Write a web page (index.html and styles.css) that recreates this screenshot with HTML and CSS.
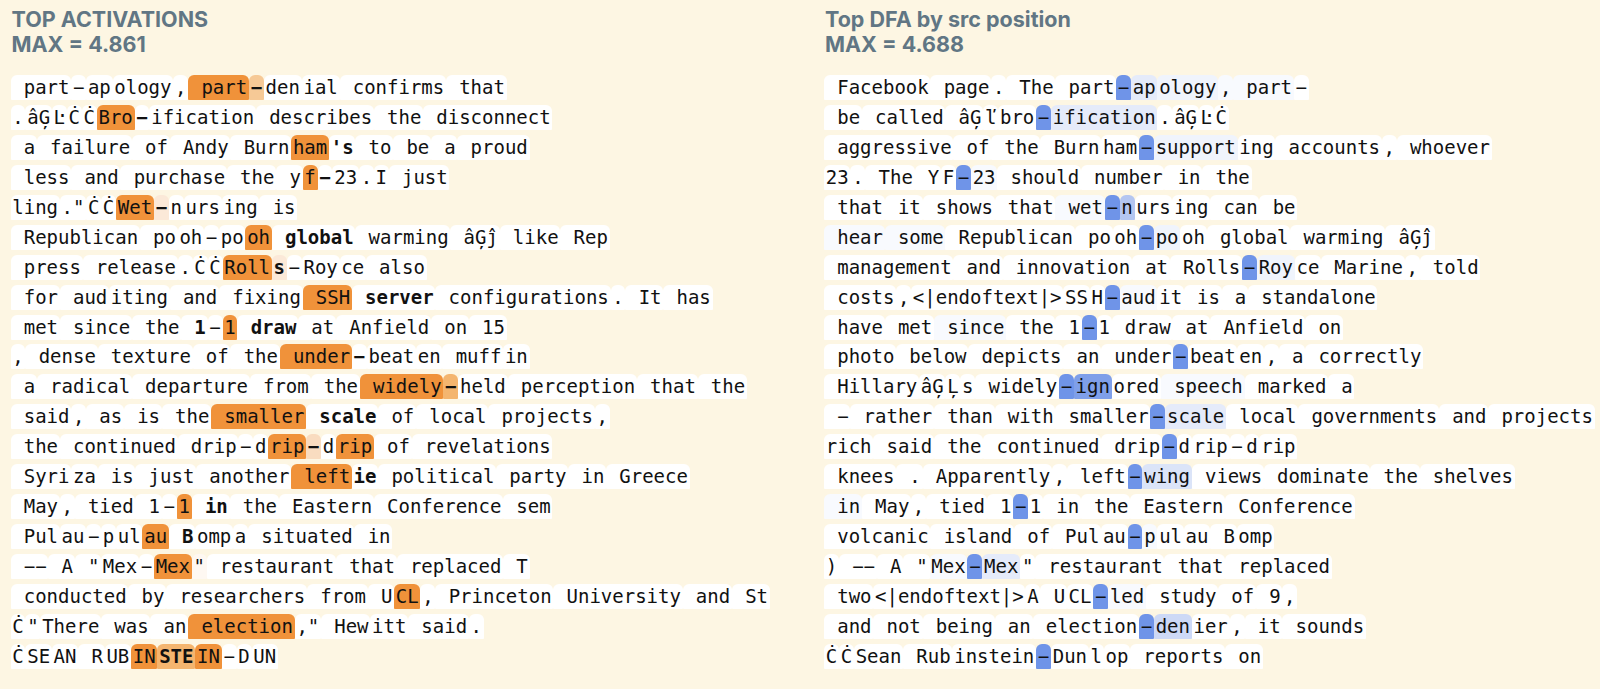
FILE: index.html
```html
<!DOCTYPE html>
<html lang="en">
<head>
<meta charset="utf-8">
<title>Top activations</title>
<link rel="stylesheet" href="styles.css">
</head>
<body>
<main class="columns">
<section class="panel">
<h2 class="title">TOP ACTIVATIONS<br>MAX = 4.861</h2>
<div class="rows">
<div class="row"><span> part</span><span>−</span><span>ap</span><span>ology</span><span>,</span><span class="o"> part</span><span class="p2 b">−</span><span>den</span><span>ial</span><span> confirms</span><span> that</span></div>
<div class="row"><span>.</span><span>âĢ</span><span>Ŀ</span><span>Ċ</span><span>Ċ</span><span class="o">Bro</span><span class="b">−</span><span>ification</span><span> describes</span><span> the</span><span> disconnect</span></div>
<div class="row"><span> a</span><span> failure</span><span> of</span><span> Andy</span><span> Burn</span><span class="o">ham</span><span class="b">'s</span><span> to</span><span> be</span><span> a</span><span> proud</span></div>
<div class="row"><span> less</span><span> and</span><span> purchase</span><span> the</span><span> y</span><span class="o">f</span><span class="b">−</span><span>23</span><span>.</span><span>I</span><span> just</span></div>
<div class="row"><span>ling</span><span>."</span><span>Ċ</span><span>Ċ</span><span class="o">Wet</span><span class="p4 b">−</span><span>n</span><span>urs</span><span>ing</span><span> is</span></div>
<div class="row"><span> Republican</span><span> po</span><span>oh</span><span>−</span><span>po</span><span class="o">oh</span><span class="b"> global</span><span> warming</span><span> âĢĵ</span><span> like</span><span> Rep</span></div>
<div class="row"><span> press</span><span> release</span><span>.</span><span>Ċ</span><span>Ċ</span><span class="o">Roll</span><span class="p4 b">s</span><span>−</span><span>Roy</span><span>ce</span><span> also</span></div>
<div class="row"><span> for</span><span> aud</span><span>iting</span><span> and</span><span> fixing</span><span class="o"> SSH</span><span class="b"> server</span><span> configurations</span><span>.</span><span> It</span><span> has</span></div>
<div class="row"><span> met</span><span> since</span><span> the</span><span class="b"> 1</span><span>−</span><span class="o">1</span><span class="b"> draw</span><span> at</span><span> Anfield</span><span> on</span><span> 15</span></div>
<div class="row"><span>,</span><span> dense</span><span> texture</span><span> of</span><span> the</span><span class="o"> under</span><span class="b">−</span><span>beat</span><span>en</span><span> muff</span><span>in</span></div>
<div class="row"><span> a</span><span> radical</span><span> departure</span><span> from</span><span> the</span><span class="o"> widely</span><span class="p1 b">−</span><span>held</span><span> perception</span><span> that</span><span> the</span></div>
<div class="row"><span> said</span><span>,</span><span> as</span><span> is</span><span> the</span><span class="o"> smaller</span><span class="b"> scale</span><span> of</span><span> local</span><span> projects</span><span>,</span></div>
<div class="row"><span> the</span><span> continued</span><span> drip</span><span>−</span><span>d</span><span class="o">rip</span><span class="p3 b">−</span><span>d</span><span class="o">rip</span><span> of</span><span> revelations</span></div>
<div class="row"><span> Syri</span><span>za</span><span> is</span><span> just</span><span> another</span><span class="o"> left</span><span class="b">ie</span><span> political</span><span> party</span><span> in</span><span> Greece</span></div>
<div class="row"><span> May</span><span>,</span><span> tied</span><span> 1</span><span>−</span><span class="o">1</span><span class="b"> in</span><span> the</span><span> Eastern</span><span> Conference</span><span> sem</span></div>
<div class="row"><span> Pul</span><span>au</span><span>−</span><span>p</span><span>ul</span><span class="o">au</span><span class="b"> B</span><span>omp</span><span>a</span><span> situated</span><span> in</span></div>
<div class="row"><span> −−</span><span> A</span><span> "</span><span>Mex</span><span>−</span><span class="o">Mex</span><span class="p5">"</span><span> restaurant</span><span> that</span><span> replaced</span><span> T</span></div>
<div class="row"><span> conducted</span><span> by</span><span> researchers</span><span> from</span><span> U</span><span class="o">CL</span><span>,</span><span> Princeton</span><span> University</span><span> and</span><span> St</span></div>
<div class="row"><span>Ċ</span><span>"</span><span>There</span><span> was</span><span> an</span><span class="o"> election</span><span>,"</span><span> Hew</span><span>itt</span><span> said</span><span>.</span></div>
<div class="row"><span>Ċ</span><span>SE</span><span>AN</span><span> R</span><span>UB</span><span class="o">IN</span><span class="p1 b">STE</span><span class="o">IN</span><span>−</span><span>D</span><span>UN</span></div>
</div>
</section>
<section class="panel">
<h2 class="title">Top DFA by src position<br>MAX = 4.688</h2>
<div class="rows">
<div class="row"><span> Facebook</span><span> page</span><span>.</span><span> The</span><span> part</span><span class="u">−</span><span class="l2">ap</span><span class="l3">ology</span><span class="l4">,</span><span class="l4"> part</span><span>−</span></div>
<div class="row"><span> be</span><span> called</span><span> âĢ</span><span>ľ</span><span>bro</span><span class="u">−</span><span class="l2">ification</span><span>.</span><span>âĢ</span><span>Ŀ</span><span>Ċ</span></div>
<div class="row"><span> aggressive</span><span> of</span><span> the</span><span> Burn</span><span>ham</span><span class="u">−</span><span class="l3">support</span><span>ing</span><span> accounts</span><span>,</span><span> whoever</span></div>
<div class="row"><span>23</span><span>.</span><span> The</span><span> Y</span><span>F</span><span class="u">−</span><span class="l4">23</span><span> should</span><span> number</span><span> in</span><span> the</span></div>
<div class="row"><span> that</span><span> it</span><span> shows</span><span> that</span><span class="l4"> wet</span><span class="u">−</span><span class="m">n</span><span>urs</span><span>ing</span><span> can</span><span> be</span></div>
<div class="row"><span class="l4"> hear</span><span class="l4"> some</span><span> Republican</span><span> po</span><span>oh</span><span class="u">−</span><span class="l3">po</span><span>oh</span><span> global</span><span> warming</span><span> âĢĵ</span></div>
<div class="row"><span> management</span><span> and</span><span> innovation</span><span> at</span><span> Rolls</span><span class="u">−</span><span class="l3">Roy</span><span>ce</span><span> Marine</span><span>,</span><span> told</span></div>
<div class="row"><span> costs</span><span>,</span><span>&lt;|endoftext|&gt;</span><span>SS</span><span>H</span><span class="u">−</span><span class="l4">aud</span><span>it</span><span> is</span><span> a</span><span> standalone</span></div>
<div class="row"><span> have</span><span> met</span><span class="l4"> since</span><span> the</span><span> 1</span><span class="u">−</span><span>1</span><span> draw</span><span> at</span><span> Anfield</span><span> on</span></div>
<div class="row"><span> photo</span><span> below</span><span> depicts</span><span> an</span><span> under</span><span class="u">−</span><span>beat</span><span>en</span><span>,</span><span> a</span><span> correctly</span></div>
<div class="row"><span> Hillary</span><span>âĢ</span><span>Ļ</span><span>s</span><span> widely</span><span class="u">−</span><span class="s">ign</span><span>ored</span><span class="l4"> speech</span><span> marked</span><span> a</span></div>
<div class="row"><span> −</span><span> rather</span><span> than</span><span> with</span><span> smaller</span><span class="u">−</span><span class="l2">scale</span><span> local</span><span> governments</span><span> and</span><span> projects</span></div>
<div class="row"><span>rich</span><span> said</span><span> the</span><span> continued</span><span> drip</span><span class="u">−</span><span>d</span><span>rip</span><span>−</span><span>d</span><span>rip</span></div>
<div class="row"><span> knees</span><span> .</span><span> Apparently</span><span>,</span><span> left</span><span class="u">−</span><span class="l1">wing</span><span> views</span><span> dominate</span><span> the</span><span> shelves</span></div>
<div class="row"><span class="l4"> in</span><span> May</span><span>,</span><span> tied</span><span> 1</span><span class="u">−</span><span>1</span><span> in</span><span> the</span><span> Eastern</span><span> Conference</span></div>
<div class="row"><span> volcanic</span><span> island</span><span> of</span><span> Pul</span><span>au</span><span class="u">−</span><span class="l4">p</span><span>ul</span><span>au</span><span> B</span><span>omp</span></div>
<div class="row"><span>)</span><span> −−</span><span> A</span><span> "</span><span class="l4">Mex</span><span class="u">−</span><span class="l2">Mex</span><span>"</span><span> restaurant</span><span> that</span><span> replaced</span></div>
<div class="row"><span> two</span><span>&lt;|endoftext|&gt;</span><span>A</span><span> U</span><span>CL</span><span class="u">−</span><span class="l4">led</span><span> study</span><span> of</span><span> 9</span><span>,</span></div>
<div class="row"><span> and</span><span> not</span><span> being</span><span> an</span><span> election</span><span class="u">−</span><span class="l0">den</span><span>ier</span><span>,</span><span> it</span><span> sounds</span></div>
<div class="row"><span>Ċ</span><span>Ċ</span><span>Sean</span><span> Rub</span><span>instein</span><span class="u">−</span><span>Dun</span><span>l</span><span>op</span><span> reports</span><span> on</span></div>
</div>
</section>
</main>
</body>
</html>
```

FILE: styles.css
```css
html, body {
  margin: 0;
  height: 100%;
  background: #fdf6e3;
}

.columns {
  display: grid;
  grid-template-columns: 813.5px 1fr;
  padding: 7px 0 0 10.5px;
}

.title {
  margin: 0 0 19px;
  padding-left: 1px;
  font: 700 21.5px/24.5px Inter, "Liberation Sans", sans-serif;
  color: #617684;
}

.rows {
  display: grid;
  row-gap: 4.95px;
  justify-items: start;
}

.row {
  display: flex;
  height: 25px;
  font: 400 19px/25px "DejaVu Sans Mono", "Liberation Mono", monospace;
  color: #111;
}

.row span {
  padding: 0 1.75px;
  border-radius: 6px 6px 1px 1px;
  background: #fff;
  white-space: pre;
}

.row .b { font-weight: 700; }

.row .o { background: #f0923a; }
.row .p1 { background: #f4b56f; }
.row .p2 { background: #f6c996; }
.row .p3 { background: #f9dcc0; }
.row .p4 { background: #fbe9d8; }
.row .p5 { background: #fef8f2; }

.row .u { background: #6f94e8; }
.row .s { background: #7f9fe9; }
.row .m { background: #b4c6f1; }
.row .l0 { background: #cdd9f6; }
.row .l1 { background: #dbe4f8; }
.row .l2 { background: #e5ebfa; }
.row .l3 { background: #f0f4fc; }
.row .l4 { background: #f8fafe; }
```
